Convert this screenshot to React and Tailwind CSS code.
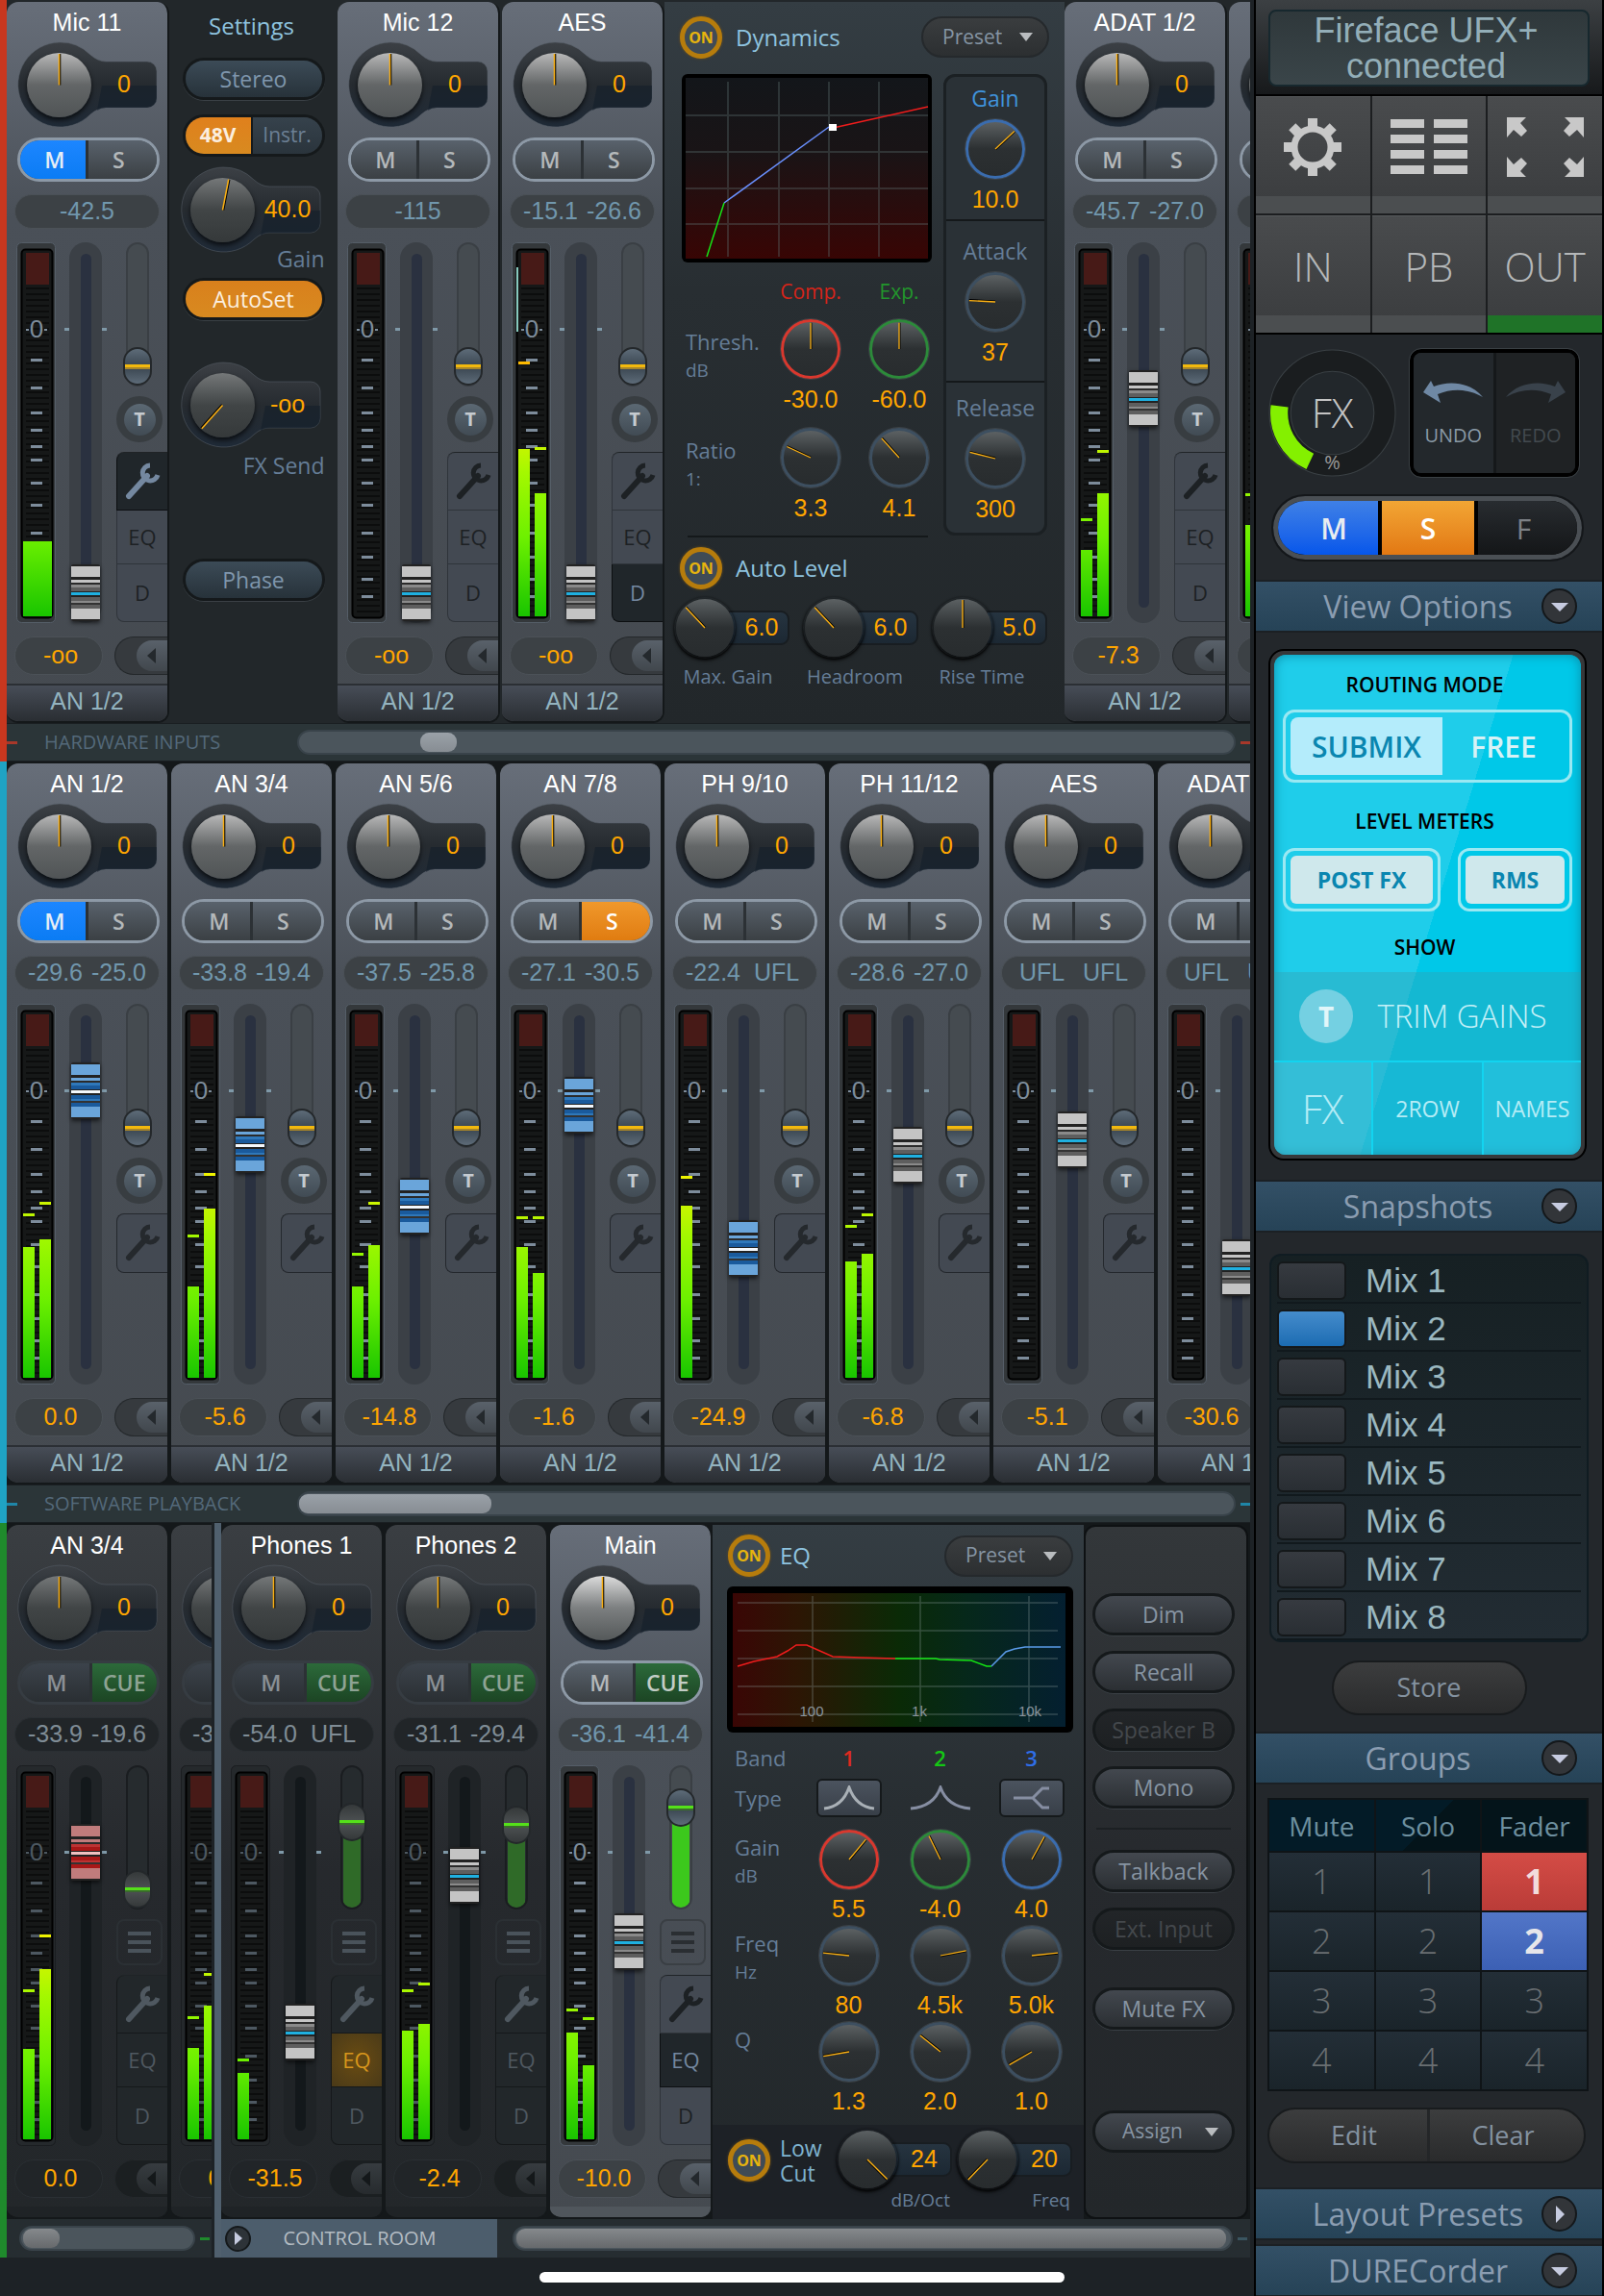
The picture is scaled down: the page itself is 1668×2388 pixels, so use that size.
import clsx from "clsx";

const hardwareInputs = {
  mic11: { name: "Mic 11", mute: true, levels: ["-42.5"], fader: 617, gain: "-oo", out: "AN 1/2", meter: { mono: true, l: 564 }, open: "tool" },
  mic12: { name: "Mic 12", levels: ["-115"], fader: 617, gain: "-oo", out: "AN 1/2", meter: {} },
  aes: { name: "AES", levels: ["-15.1", "-26.6"], fader: 617, gain: "-oo", out: "AN 1/2", meter: { l: 468, r: 514, pl: 378, pr: 467, reduction: true }, open: "D" },
  adat: { name: "ADAT 1/2", levels: ["-45.7", "-27.0"], fader: 415, gain: "-7.3", out: "AN 1/2", meter: { l: 573, r: 514, pl: 541, pr: 470 } },
  adat2: { name: "", levels: ["", ""], fader: 617, gain: "", out: "", meter: { l: 547, r: 547, pl: 515, pr: 515 } },
};

const playback = [
  { name: "AN 1/2", mute: true, levels: ["-29.6", "-25.0"], fader: 343, cap: "blue", gain: "0.0", meter: { l: 506, r: 498, pl: 472, pr: 460 } },
  { name: "AN 3/4", levels: ["-33.8", "-19.4"], fader: 399, cap: "blue", gain: "-5.6", meter: { l: 547, r: 466, pl: 494, pr: 430 } },
  { name: "AN 5/6", levels: ["-37.5", "-25.8"], fader: 463, cap: "blue", gain: "-14.8", meter: { l: 547, r: 504, pl: 513, pr: 460 } },
  { name: "AN 7/8", solo: true, levels: ["-27.1", "-30.5"], fader: 358, cap: "blue", gain: "-1.6", meter: { l: 506, r: 533, pl: 475, pr: 475 } },
  { name: "PH 9/10", levels: ["-22.4", "UFL"], fader: 507, cap: "blue", gain: "-24.9", meter: { l: 463, pl: 433 } },
  { name: "PH 11/12", levels: ["-28.6", "-27.0"], fader: 410, gain: "-6.8", meter: { l: 521, r: 513, pl: 484, pr: 472 } },
  { name: "AES", levels: ["UFL", "UFL"], fader: 394, gain: "-5.1", meter: {} },
  { name: "ADAT 1/2", levels: ["UFL", "UFL"], fader: 527, gain: "-30.6", meter: {} },
];

const outputs = {
  an34: { name: "AN 3/4", levels: ["-33.9", "-19.6"], fader: 343, cap: "red", gain: "0.0", trim: 0, meter: { l: 548, r: 465, pl: 487, pr: 430 } },
  an56: { name: "", levels: ["-33.9", ""], fader: 343, gain: "0.0", trim: 0, meter: { l: 547, r: 503, pl: 515, pr: 470 } },
  phones1: { name: "Phones 1", levels: ["-54.0", "UFL"], fader: 530, gain: "-31.5", trim: 70, meter: { l: 573, pl: 559 }, eqOn: true },
  phones2: { name: "Phones 2", levels: ["-31.1", "-29.4"], fader: 367, gain: "-2.4", trim: 67, meter: { l: 529, r: 522, pl: 487, pr: 480 } },
  main: { name: "Main", levels: ["-36.1", "-41.4"], fader: 436, gain: "-10.0", trim: 85, meter: { l: 531, r: 565, pl: 507, pr: 516 }, open: "EQ" },
};

const METER_TICKS = [375, 404, 430, 448, 465, 479, 503, 526, 555, 580, 603, 621];

const CAPS = {
  grey: "[--hi:#c4c4c4] [--mid:#8a8a8a] [--low:#5e5e5e] [--mark:#1fb0e0]",
  blue: "[--hi:#6aa5da] [--mid:#2f78ba] [--low:#1a5a9c] [--mark:#f4f8fc]",
  red: "[--hi:#c07c7c] [--mid:#bc3434] [--low:#a81818] [--mark:#f0c0c0]",
};

function Defs() {
  return (
    <svg width="0" height="0" className="absolute" aria-hidden="true">
      <defs>
        <linearGradient id="level" gradientUnits="userSpaceOnUse" x1="0" x2="0" y1="370" y2="643">
          <stop offset="0" stopColor="#ffb000" />
          <stop offset="0.2" stopColor="#f6f200" />
          <stop offset="0.45" stopColor="#a4f800" />
          <stop offset="0.7" stopColor="#6cf000" />
          <stop offset="1" stopColor="#18c400" />
        </linearGradient>
        <linearGradient id="socket" x1="0" x2="0" y1="0" y2="1">
          <stop offset="0" stopColor="#3c4045" />
          <stop offset="0.5" stopColor="#262b30" />
          <stop offset="1" stopColor="#1f2a37" />
        </linearGradient>
      </defs>
    </svg>
  );
}

function Dial({ label, angle = 0, size = "lg", tone = "dim", ring }) {
  const sizes = { lg: "size-[67px]", md: "size-[60px]", sm: "size-[62px]" };
  const tones = {
    light: "from-[#dcdcdc] via-[#7c7f80] to-[#55595a]",
    mid: "from-[#b9b9b9] via-[#636667] to-[#505456]",
    dim: "from-[#757879] via-[#414546] to-[#35393a]",
    dark: "from-[#5c6163] via-[#2c3032] to-[#282c2e]",
  };
  const rings = {
    red: "border-[#d9382e]",
    green: "border-[#2c8a3a]",
    blue: "border-[#3a6cae]",
    slate: "border-[#3d4f60]",
  };
  return (
    <div
      className={clsx(
        "relative shrink-0 rounded-full bg-linear-to-b",
        sizes[size],
        tones[tone],
        ring ? ["border-[3px] outline-1 outline-[#4a4f53]/60", rings[ring]] : "shadow-[0_3px_5px_rgba(0,0,0,0.7)]"
      )}
    >
      <svg viewBox="0 0 66 66" className="block size-full" aria-hidden="true">
        <g transform={`rotate(${angle} 33 33)`}>
          <line x1="34" y1="1" x2="34" y2="33" stroke="#000" strokeWidth="1.5" />
          <line x1="33" y1="1" x2="33" y2="33" stroke="#fbb013" strokeWidth="1.5" />
        </g>
      </svg>
      <input type="range" aria-label={label} min="-140" max="140" defaultValue={angle} className="absolute inset-0 size-full cursor-pointer opacity-0" />
    </div>
  );
}

function SocketKnob({ label, angle, tone, value }) {
  return (
    <div className="relative flex h-[90px] w-[148px] items-center">
      <svg viewBox="0 0 148 90" className="absolute inset-0" aria-hidden="true">
        <path
          d="M45 1A44 44 0 0 1 77 14Q85 21 93 21H136a10 10 0 0 1 10 10V59a10 10 0 0 1-10 10H93Q85 69 77 76A44 44 0 1 1 45 1Z"
          fill="url(#socket)"
          stroke="#5a626b"
          strokeOpacity="0.5"
        />
        <path d="M89 46h57v13a10 10 0 0 1-10 10H93q-5 0-9 3z" fill="#0f1c28" fillOpacity="0.5" />
      </svg>
      <div className="relative ml-[11px] flex items-center">
        <Dial label={label} angle={angle} tone={tone} />
        <output className="w-[68px] text-center text-[25px] text-[#ffa500]">{value}</output>
      </div>
    </div>
  );
}

function MiniKnob({ label, angle, value }) {
  return (
    <div className="flex items-center">
      <div className="relative z-10 rounded-full p-[2px] shadow-[0_1px_3px_#000]">
        <Dial label={label} angle={angle} size="md" tone="dark" />
      </div>
      <output className="-ml-[8px] flex h-[36px] w-[64px] items-center justify-center rounded-r-[9px] border-2 border-[#181d21] bg-linear-to-b from-[#263440] to-[#1c2833] pl-[6px] text-[25px] text-[#ffa500]">
        {value}
      </output>
    </div>
  );
}

function Meter({ mono, l, r, pl, pr, reduction, dark }) {
  const tick = dark ? "#4d5861" : "#7d8c9b";
  const leftWidth = mono ? 30 : 12;
  return (
    <svg viewBox="17 253 41 396" className="h-[396px] w-[41px] shrink-0" aria-hidden="true">
      <rect x="17.5" y="253.5" width="40" height="395" rx="5" fill={dark ? "#25292c" : "#34383b"} stroke={dark ? "#1a1d20" : "#555e68"} />
      <rect x="22.5" y="260.5" width="32" height="383" rx="4" fill="#161818" stroke="#000" strokeWidth="2" />
      <rect x="27" y="264" width="24" height="33" fill="#471a17" />
      {Array.from({ length: 57 }, (_, i) => (
        <rect key={i} x="27" y={300 + i * 6} width="24" height="2" fill="#0c0d0d" />
      ))}
      <text x="38" y="352" textAnchor="middle" fontSize="26" fill={tick} fontFamily="Liberation Sans, sans-serif">0</text>
      <path d="M27 344h3M46 344h3" stroke={tick} strokeWidth="2" />
      {METER_TICKS.map((y) => (
        <rect key={y} x="32" y={y - 1} width="12" height="3" fill={tick} />
      ))}
      {l && <rect x="24" y={l} width={leftWidth} height={642 - l} fill="url(#level)" />}
      {r && <rect x="41" y={r} width="12" height={642 - r} fill="url(#level)" />}
      {pl && <rect x="24" y={pl - 1} width="12" height="3" fill="url(#level)" />}
      {pr && <rect x="41" y={pr - 1} width="12" height="3" fill="url(#level)" />}
      {reduction && <rect x="22" y="279" width="2" height="67" fill="#86c9bd" />}
    </svg>
  );
}

function Fader({ name, center, cap = "grey", dark }) {
  return (
    <div className="relative flex h-[396px] w-[44px] shrink-0 justify-center">
      <div className={clsx("flex h-full w-[34px] justify-center rounded-full pt-3 pb-4", dark ? "bg-[#1f2326]" : "bg-[#3b4046]")}>
        <div className={clsx("w-[11px] rounded-full", dark ? "bg-[#13181b]" : "bg-[#2a3140]")} />
      </div>
      <div className="absolute inset-x-0 top-[89px] flex justify-between">
        <span className="h-[3px] w-[5px] bg-[#7f99a8]" />
        <span className="h-[3px] w-[5px] bg-[#7f99a8]" />
      </div>
      <input
        type="range"
        aria-label={`${name || "Channel"} fader`}
        min="0"
        max="335"
        defaultValue={617 - center}
        className={clsx(
          "absolute top-0 left-[7px] h-[394px] w-[30px] appearance-none bg-transparent [direction:rtl] [writing-mode:vertical-lr]",
          "[&::-webkit-slider-thumb]:h-[59px] [&::-webkit-slider-thumb]:w-[30px] [&::-webkit-slider-thumb]:appearance-none [&::-webkit-slider-thumb]:rounded-[2px]",
          "[&::-webkit-slider-thumb]:shadow-[0_2px_4px_rgba(0,0,0,0.6)]",
          "[&::-webkit-slider-thumb]:bg-[linear-gradient(#222_0_2px,var(--hi)_2px_13px,#222_13px_16px,var(--hi)_16px_19px,#2a2a2a_19px_21px,var(--mid)_21px_24px,var(--low)_24px_28px,#222_28px_29px,var(--mark)_29px_32px,#222_32px_34px,var(--low)_34px_38px,var(--mid)_38px_40px,#333_40px_42px,var(--low)_42px_46px,var(--hi)_46px_57px,#222_57px_59px)]",
          CAPS[cap]
        )}
      />
    </div>
  );
}

function TrimSlider({ name, value = 0, cue, dark }) {
  return (
    <div className="relative ml-[10px] h-[150px] w-[24px] shrink-0">
      <div
        className={clsx(
          "flex size-full flex-col justify-end overflow-hidden rounded-full border-2",
          dark ? "border-[#1a1d20] bg-[#262b2e]" : "border-[#3a3f44] bg-[#454b50]"
        )}
      >
        {cue && value > 0 && (
          <div className={clsx("mx-auto w-[18px]", dark ? "bg-[#2f6a28]" : "bg-[#3cc81c]")} style={{ height: value + 20 }} />
        )}
      </div>
      <input
        type="range"
        aria-label={`${name || "Channel"} trim`}
        min="0"
        max="110"
        defaultValue={value}
        className={clsx(
          "absolute -top-px -left-[3px] h-[150px] w-[30px] appearance-none bg-transparent [direction:rtl] [writing-mode:vertical-lr]",
          "[&::-webkit-slider-thumb]:h-[40px] [&::-webkit-slider-thumb]:w-[30px] [&::-webkit-slider-thumb]:appearance-none [&::-webkit-slider-thumb]:rounded-full",
          "[&::-webkit-slider-thumb]:border-2 [&::-webkit-slider-thumb]:border-[#24282b]",
          "[&::-webkit-slider-thumb]:bg-[linear-gradient(var(--a),var(--b)_16px,var(--c)_16px_19px,var(--d)_19px_21px,var(--b)_21px,var(--a))]",
          dark ? "[--a:#35393a] [--b:#4a4e50]" : "[--a:#5d6b78] [--b:#3e4a55]",
          cue ? "[--c:#55e01a] [--d:#3a6b2c]" : "[--c:#f2b90e] [--d:#a8862a]"
        )}
      />
    </div>
  );
}

function Wrench() {
  return (
    <svg viewBox="0 0 38 40" className="h-[40px] w-[38px]" fill="none" stroke="currentColor" aria-hidden="true">
      <path d="M5 35 24 14" strokeWidth="6" strokeLinecap="round" />
      <path d="M27 3A8 8 0 1 0 35 13" strokeWidth="5" />
    </svg>
  );
}

function SideTabs({ open, eqOn, dark }) {
  const base = "flex w-full items-center justify-center border-l border-b";
  const idle = dark
    ? "border-[#15181a] bg-[#22272a] text-[#4f5860]"
    : "border-[#2f343a] bg-[#434952] text-[#1d2124]";
  const active = "border-[#0c0f11] bg-[#20262a] text-[#7488a0]";
  return (
    <div className="mt-[10px] flex h-[177px] flex-col rounded-l-lg border-t border-[#202427] font-['Open_Sans',sans-serif] text-[22px] font-medium">
      <button aria-label="Settings" className={clsx(base, "h-[60px] rounded-tl-lg", open === "tool" ? active : idle)}>
        <Wrench />
      </button>
      <button
        className={clsx(
          base,
          "h-[56px]",
          eqOn ? "border-[#15181a] bg-radial from-[#6a4c10] to-[#4a3a18] text-[#d8961c]" : open === "EQ" ? active : idle
        )}
      >
        EQ
      </button>
      <button className={clsx(base, "grow rounded-bl-lg", open === "D" ? active : idle)}>D</button>
    </div>
  );
}

function MuteSolo({ mute, solo, cue, dark }) {
  return (
    <div
      className={clsx(
        "ml-[11px] mt-[10px] flex h-[46px] w-[148px] overflow-hidden rounded-full border-[3px] font-['Open_Sans',sans-serif] text-[23px] font-semibold text-[#b4b8ba]",
        dark ? "border-[#363c42]" : "border-[#8d99a6]"
      )}
    >
      <button
        className={clsx(
          "flex-1 border-r-[3px] border-[#2c3135] bg-linear-to-b pl-1",
          mute ? "from-[#1c86ff] to-[#0a7cf4] text-[#e6eef5]" : dark ? "from-[#3c434b] to-[#2a2f33] text-[#8a9095]" : "from-[#59626c] to-[#3b4044]"
        )}
      >
        M
      </button>
      <button
        className={clsx(
          "flex-1 bg-linear-to-b",
          cue && "from-[#2c6a3a] to-[#1c4524]",
          cue && (dark ? "text-[#8ea394]" : "text-[#c3cdc6]"),
          !cue && (solo ? "from-[#f0982a] to-[#e07c10] pr-2 text-white" : "from-[#59626c] to-[#3b4044] pr-2")
        )}
      >
        {cue ? "CUE" : "S"}
      </button>
    </div>
  );
}

function Channel({ ch, tone = "light", cue, open }) {
  const dark = tone === "dark";
  const well = dark ? "bg-[#212528] border-[#2a2f33]" : "bg-[#3c4145] border-[#4b5157]";
  return (
    <section
      className={clsx(
        "flex w-[169px] shrink-0 flex-col overflow-hidden rounded-xl border-r-2 border-b-2 border-[#14181a]",
        dark ? "bg-linear-to-b from-[#3a3e42] via-[#26292d] to-[#23272a]" : "bg-linear-to-b from-[#676e79] via-[#4a5058] via-30% to-[#454a50]"
      )}
    >
      <h2 className="h-[41px] text-center text-[25px] leading-[42px] text-white">{ch.name}</h2>
      <div className="ml-[10px]">
        <SocketKnob label={`${ch.name || "Channel"} pan`} tone={dark ? "dim" : open ? "light" : "mid"} value="0" />
      </div>
      <MuteSolo mute={ch.mute} solo={ch.solo} cue={cue} dark={dark} />
      <div
        className={clsx(
          "ml-[8px] mt-[13px] flex h-[36px] w-[151px] items-center justify-center rounded-full border text-[25px]",
          well,
          dark ? "text-[#7f8c95]" : "text-[#7197ad]"
        )}
      >
        {ch.levels.map((level, i) => (
          <span key={i} className="w-[66px] text-center whitespace-nowrap">{level}</span>
        ))}
      </div>
      <div className="mt-[14px] flex h-[398px] pl-[10px]">
        <Meter {...ch.meter} dark={dark} />
        <div className="ml-[9px]">
          <Fader name={ch.name} center={ch.fader} cap={ch.cap} dark={dark} />
        </div>
        <div className="ml-[10px] flex w-[55px] flex-col">
          <TrimSlider name={ch.name} value={ch.trim} cue={cue} dark={dark} />
          {cue ? (
            <button
              aria-label="Channel menu"
              className={clsx(
                "mt-[10px] flex h-[48px] w-[48px] flex-col items-center justify-center gap-[5px] rounded-lg border-2",
                dark ? "border-[#2b3034] text-[#4a535b]" : "border-[#3a3f44] text-[#2a2e32]"
              )}
            >
              <i className="h-[4px] w-[24px] bg-current" />
              <i className="h-[4px] w-[24px] bg-current" />
              <i className="h-[4px] w-[24px] bg-current" />
            </button>
          ) : (
            <button className="mt-[10px] flex size-[48px] items-center justify-center rounded-full bg-[#383d41]">
              <span className="flex size-[33px] items-center justify-center rounded-full bg-linear-to-b from-[#5b6873] to-[#414b54] font-['Open_Sans',sans-serif] text-[20px] font-bold text-[#c5cbd0]">
                T
              </span>
            </button>
          )}
          {ch.tabs !== "tool" && <SideTabs open={ch.open} eqOn={ch.eqOn} dark={dark} />}
          {ch.tabs === "tool" && (
            <button
              aria-label="Settings"
              className="mt-[10px] flex h-[62px] w-full items-center justify-center rounded-l-lg border border-r-0 border-[#24282d] bg-[#434952] text-[#25292d]"
            >
              <Wrench />
            </button>
          )}
        </div>
      </div>
      <div className="mt-[12px] flex h-[40px] justify-between pl-[8px]">
        <output className={clsx("flex w-[92px] items-center justify-center rounded-full border pl-[4px] text-[25px] text-[#ffa500]", well)}>{ch.gain}</output>
        <button
          aria-label="Collapse channel"
          className={clsx("flex w-[55px] justify-end rounded-l-full border border-r-0 border-[#24282b] p-[3px] pr-0", dark ? "bg-[#1b1f21]" : "bg-[#363a3e]")}
        >
          <span className={clsx("flex h-full w-[32px] items-center justify-center rounded-l-full bg-linear-to-b", dark ? "from-[#373c40] to-[#272b2e]" : "from-[#59616a] to-[#41474d]")}>
            <svg viewBox="0 0 10 16" className="h-[16px] w-[10px]" aria-hidden="true">
              <path d="M9 0v16L0 8z" fill={dark ? "#14181a" : "#24292d"} />
            </svg>
          </span>
        </button>
      </div>
      {cue ? (
        <div className={clsx("mt-[9px] h-[11px]", dark ? "bg-[#1f2326]" : "bg-[#50565c]")} />
      ) : (
        <div className="mt-[9px] h-[39px] border-t-2 border-[#2b2f34] bg-linear-to-b from-[#474d57] to-[#2a2e33] text-center text-[25px] leading-[32px] text-[#93b3bf]">
          {ch.out ?? "AN 1/2"}
        </div>
      )}
    </section>
  );
}

function PillButton({ children, variant = "blue", className }) {
  const variants = {
    blue: "from-[#3c4b57] to-[#27323a] text-[#7f96ac]",
    orange: "from-[#d9801c] to-[#d88a20] text-[#fbeede]",
    grey: "from-[#43484f] to-[#2b2f33] text-[#8794a2]",
    off: "from-[#222528] to-[#1d2022] text-[#44484c]",
  };
  return (
    <button
      className={clsx(
        "h-[44px] w-[148px] rounded-full border-[3px] border-[#15191b] bg-linear-to-b font-['Open_Sans',sans-serif] text-[23px] shadow-[0_1px_0_#3a4045]",
        variants[variant],
        className
      )}
    >
      {children}
    </button>
  );
}

function OnButton({ label }) {
  return (
    <button
      aria-label={label}
      className="flex size-[44px] shrink-0 items-center justify-center rounded-full border-[5px] border-[#b67c0c] bg-[#3f4b55] font-['Open_Sans',sans-serif] text-[16px] font-bold text-[#e6b40e] shadow-[0_0_3px_#6a5020]"
    >
      ON
    </button>
  );
}

function DropDown({ label, className, selectClass }) {
  return (
    <label className={clsx("relative flex items-center font-['Open_Sans',sans-serif] text-[21px]", className)}>
      <select aria-label={label} className={clsx("size-full cursor-pointer appearance-none rounded-full bg-linear-to-b", selectClass)}>
        <option>{label}</option>
      </select>
      <svg viewBox="0 0 14 9" className="pointer-events-none absolute right-[17px] h-[9px] w-[14px]" aria-hidden="true">
        <path d="M0 0h14L7 9z" fill="#b9bcbf" />
      </svg>
    </label>
  );
}

function SettingsPanel() {
  return (
    <aside className="flex w-[175px] shrink-0 flex-col items-center font-['Open_Sans',sans-serif]">
      <h3 className="mt-[5px] pr-[4px] text-[24px] leading-[40px] text-[#8ec3df]">Settings</h3>
      <PillButton className="mt-[13px]">Stereo</PillButton>
      <div className="mt-[15px] flex h-[44px] w-[148px] overflow-hidden rounded-full border-[3px] border-[#15191b] text-[21px]">
        <button className="w-[70px] border-r-2 border-[#15191b] bg-linear-to-b from-[#e0801c] to-[#d88a20] font-bold text-[#fbeede]">48V</button>
        <button className="flex-1 bg-linear-to-b from-[#36424c] to-[#2a343c] text-[#6b7f94]">Instr.</button>
      </div>
      <div className="mt-[10px] ml-[11px] self-start font-['Liberation_Sans',Arial,sans-serif]">
        <SocketKnob label="Gain" angle={11} value="40.0" />
      </div>
      <p className="-mt-[6px] w-[148px] text-right text-[23px] leading-[24px] text-[#657d97]">Gain</p>
      <PillButton variant="orange" className="mt-[8px]">AutoSet</PillButton>
      <div className="mt-[43px] ml-[11px] self-start font-['Liberation_Sans',Arial,sans-serif]">
        <SocketKnob label="FX Send" angle={-138} value="-oo" />
      </div>
      <p className="mt-[4px] w-[148px] text-right text-[23px] leading-[28px] text-[#657d97]">FX Send</p>
      <PillButton className="mt-[83px]">Phase</PillButton>
    </aside>
  );
}

function ParamKnob({ label, angle, ring = "slate", value }) {
  return (
    <div className="flex w-[92px] shrink-0 flex-col items-center">
      <Dial label={label} angle={angle} ring={ring} size="sm" tone="dark" />
      <output className="text-[25px] leading-[42px] text-[#ffa500]">{value}</output>
    </div>
  );
}

function ParamLabel({ children, unit }) {
  return (
    <div className="w-[84px] shrink-0 pt-[8px] font-['Open_Sans',sans-serif] text-[#657d97]">
      <p className="text-[22px] leading-[30px]">{children}</p>
      {unit && <p className="text-[19px] leading-[30px]">{unit}</p>}
    </div>
  );
}

function DynamicsPanel() {
  const side = [
    { name: "Gain", angle: 47, value: "10.0", ring: "blue", color: "text-[#4093dc]", box: "h-[150px]" },
    { name: "Attack", angle: -87, value: "37", color: "text-[#657d97]", box: "h-[168px]" },
    { name: "Release", angle: -76, value: "300", color: "text-[#657d97]", box: "h-[156px]" },
  ];
  return (
    <section className="flex w-[416px] shrink-0 flex-col bg-linear-to-b from-[#343d43] via-[#282e32] via-40% to-[#22272a]">
      <header className="flex h-[75px] items-center pl-[16px] pr-[16px] pb-[2px] font-['Open_Sans',sans-serif]">
        <OnButton label="Dynamics on" />
        <h3 className="ml-[14px] text-[24px] text-[#8ec3df]">Dynamics</h3>
        <DropDown label="Preset" className="ml-auto h-[43px] w-[133px]" selectClass="border-2 border-[#25292c] from-[#3a3d3f] to-[#2c2f31] pl-[20px] text-[#8594a3]" />
      </header>
      <div className="flex h-[480px]">
        <div className="ml-[18px] w-[272px] shrink-0">
          <svg viewBox="709 78 260 196" className="block h-[196px] w-[260px]" aria-label="Dynamics curve">
            <defs>
              <linearGradient id="dyn" x1="0" x2="0" y1="0" y2="1">
                <stop offset="0" stopColor="#13161a" />
                <stop offset="0.4" stopColor="#191416" />
                <stop offset="1" stopColor="#380504" />
              </linearGradient>
            </defs>
            <rect x="709" y="78" width="260" height="196" rx="6" fill="#000" />
            <rect x="713" y="82" width="252" height="188" fill="url(#dyn)" />
            <path d="M757 86V268M810 86V268M862 86V268M914 86V268M713 121H965M713 159H965M713 197H965M713 234H965" stroke="#5c7070" strokeOpacity="0.35" strokeWidth="2" />
            <path d="M735 268 753 212" stroke="#14e614" strokeWidth="1.5" />
            <path d="M753 212 862 133" stroke="#6a90ff" strokeWidth="1.5" />
            <path d="M862 135 965 112" stroke="#ee1c1c" strokeWidth="1.5" />
            <rect x="862" y="130" width="8" height="7" fill="#fff" />
          </svg>
          <div className="ml-[88px] mt-[11px] flex font-['Open_Sans',sans-serif] text-[21px] leading-[38px]">
            <span className="w-[92px] text-center text-[#d62419]">Comp.</span>
            <span className="w-[92px] text-center text-[#22962c]">Exp.</span>
          </div>
          <div className="mt-[10px] flex pl-[4px]">
            <ParamLabel unit="dB">Thresh.</ParamLabel>
            <ParamKnob label="Compressor threshold" ring="red" value="-30.0" />
            <ParamKnob label="Expander threshold" ring="green" value="-60.0" />
          </div>
          <div className="mt-[9px] flex pl-[4px]">
            <ParamLabel unit="1:">Ratio</ParamLabel>
            <ParamKnob label="Compressor ratio" angle={-65} value="3.3" />
            <ParamKnob label="Expander ratio" angle={-42} value="4.1" />
          </div>
        </div>
        <div className="h-[480px] w-[108px] rounded-xl border-[3px] border-[#1b2023] bg-[#2a3136]">
          {side.map((s) => (
            <div key={s.name} className={clsx("flex flex-col items-center justify-center border-b-2 border-[#14181a] last:border-b-0", s.box)}>
              <span className={clsx("font-['Open_Sans',sans-serif] text-[23px] leading-[44px]", s.color)}>{s.name}</span>
              <Dial label={s.name} angle={s.angle} ring={s.ring ?? "slate"} size="sm" tone="dark" />
              <output className="text-[25px] leading-[42px] text-[#ffa500]">{s.value}</output>
            </div>
          ))}
        </div>
      </div>
      <hr className="ml-[24px] w-[250px] border-t-2 border-[#14181a]" />
      <div className="mt-[10px] flex items-center pl-[16px]">
        <OnButton label="Auto Level on" />
        <h3 className="ml-[14px] font-['Open_Sans',sans-serif] text-[24px] leading-[44px] text-[#8ec3df]">Auto Level</h3>
      </div>
      <div className="mt-[8px] flex gap-[14px] pl-[10px]">
        <MiniKnob label="Max. Gain" angle={-43} value="6.0" />
        <MiniKnob label="Headroom" angle={-43} value="6.0" />
        <MiniKnob label="Rise Time" angle={0} value="5.0" />
      </div>
      <div className="grid w-[402px] grid-cols-3 pr-[6px] text-center font-['Open_Sans',sans-serif] text-[20px] leading-[38px] text-[#657d97]">
        <span>Max. Gain</span>
        <span>Headroom</span>
        <span>Rise Time</span>
      </div>
    </section>
  );
}

function EqPanel() {
  const knobs = [
    { name: "Gain", unit: "dB", bands: [["5.5", 40, "red"], ["-4.0", -26, "green"], ["4.0", 29, "blue"]] },
    { name: "Freq", unit: "Hz", bands: [["80", -84], ["4.5k", 79], ["5.0k", 84]] },
    { name: "Q", bands: [["1.3", -100], ["2.0", -51], ["1.0", -120]] },
  ];
  return (
    <section className="flex w-[386px] shrink-0 flex-col bg-linear-to-b from-[#343d43] via-[#282e32] via-40% to-[#22272a]">
      <header className="flex h-[64px] items-center pl-[16px] pr-[11px] font-['Open_Sans',sans-serif]">
        <OnButton label="EQ on" />
        <h3 className="ml-[10px] text-[24px] text-[#8ec3df]">EQ</h3>
        <DropDown label="Preset" className="ml-auto h-[43px] w-[134px]" selectClass="border-2 border-[#25292c] from-[#3a3d3f] to-[#2c2f31] pl-[20px] text-[#8594a3]" />
      </header>
      <svg viewBox="757 1649 360 152" className="ml-[15px] block h-[152px] w-[360px]" aria-label="EQ curve">
        <defs>
          <linearGradient id="eq">
            <stop offset="0" stopColor="#3a0605" />
            <stop offset="0.2" stopColor="#2c1604" />
            <stop offset="0.5" stopColor="#0a2a06" />
            <stop offset="0.7" stopColor="#06281a" />
            <stop offset="1" stopColor="#041f30" />
          </linearGradient>
        </defs>
        <rect x="757" y="1649" width="360" height="152" rx="6" fill="#000" />
        <rect x="763" y="1656" width="346" height="139" fill="url(#eq)" />
        <path d="M768 1666H1101M768 1695H1101M768 1724H1101M768 1753H1101M768 1782H1101M846 1659V1790M958 1659V1790M1071 1659V1790" stroke="#8a9a9a" strokeOpacity="0.35" strokeWidth="1.5" />
        <g fill="none" strokeWidth="1.5">
          <path d="M768 1732 785 1727 809 1722 820 1716 829 1710H840L849 1714 867 1722 896 1723 932 1724" stroke="#ee1c1c" />
          <path d="M932 1724H974L978 1725 1011 1726 1027 1732H1032" stroke="#14e614" />
          <path d="M1032 1732 1047 1717 1056 1714 1067 1712H1104" stroke="#5a9ae8" />
        </g>
        <g fontFamily="Liberation Sans, sans-serif" fontSize="15" fill="#8a949c" textAnchor="middle">
          <text x="845" y="1784">100</text>
          <text x="957" y="1784">1k</text>
          <text x="1072" y="1784">10k</text>
        </g>
      </svg>
      <div className="flex pl-[23px] pt-[8px] font-['Open_Sans',sans-serif] text-[22px] leading-[36px]">
        <span className="w-[71px] text-[#657d97]">Band</span>
        <span className="w-[95px] text-center font-semibold text-[#e02a20]">1</span>
        <span className="w-[95px] text-center font-semibold text-[#14c814]">2</span>
        <span className="w-[95px] text-center font-semibold text-[#2f6ee8]">3</span>
      </div>
      <div className="flex h-[48px] items-center pl-[23px]">
        <span className="w-[71px] font-['Open_Sans',sans-serif] text-[22px] text-[#657d97]">Type</span>
        <div className="flex w-[95px] justify-center">
          <button aria-label="Band 1 bell" className="flex h-[40px] w-[68px] items-center justify-center rounded-md border-2 border-[#15191b] bg-linear-to-b from-[#4b535e] to-[#383f48]">
            <svg viewBox="0 0 54 26" className="w-[54px]" fill="none" stroke="#a9b0b6" strokeWidth="3" aria-hidden="true">
              <path d="M1 24Q20 22 27 2Q34 22 53 24" />
            </svg>
          </button>
        </div>
        <div className="flex w-[95px] justify-center">
          <svg viewBox="0 0 64 26" className="w-[64px]" fill="none" stroke="#868ea2" strokeWidth="3" aria-label="Band 2 bell">
            <path d="M1 24Q25 22 32 2Q39 22 63 24" />
          </svg>
        </div>
        <div className="flex w-[95px] justify-center">
          <button aria-label="Band 3 shelf" className="flex h-[40px] w-[68px] items-center justify-center rounded-md border-2 border-[#15191b] bg-linear-to-b from-[#4b535e] to-[#383f48]">
            <svg viewBox="0 0 38 24" className="w-[38px]" fill="none" stroke="#868ea2" strokeWidth="3" aria-hidden="true">
              <path d="M0 12H20M37 2H30L20 12L30 22H37" />
            </svg>
          </button>
        </div>
      </div>
      {knobs.map((row) => (
        <div key={row.name} className="flex h-[100px] pl-[23px] pt-[9px]">
          <div className="w-[71px] pt-[3px] font-['Open_Sans',sans-serif] text-[#657d97]">
            <p className="text-[22px] leading-[30px]">{row.name}</p>
            {row.unit && <p className="text-[19px] leading-[30px]">{row.unit}</p>}
          </div>
          {row.bands.map(([value, angle, ring], i) => (
            <div key={i} className="flex w-[95px] flex-col items-center">
              <Dial label={`${row.name} band ${i + 1}`} angle={angle} ring={ring ?? "slate"} size="sm" tone="dark" />
              <output className="text-[25px] leading-[40px] text-[#ffa500]">{value}</output>
            </div>
          ))}
        </div>
      ))}
      <div className="mt-auto flex h-[98px] bg-[#1d2126] pl-[16px] pt-[4px]">
        <div className="flex h-[66px] items-center self-start">
          <OnButton label="Low Cut on" />
          <p className="ml-[10px] w-[47px] font-['Open_Sans',sans-serif] text-[23px] leading-[26px] text-[#7fb3cf]">Low Cut</p>
        </div>
        <div className="ml-[12px]">
          <MiniKnob label="Low Cut slope" angle={135} value="24" />
          <p className="pr-[2px] text-right font-['Open_Sans',sans-serif] text-[19px] leading-[20px] text-[#657d97]">dB/Oct</p>
        </div>
        <div className="ml-[5px]">
          <MiniKnob label="Low Cut frequency" angle={-136} value="20" />
          <p className="pr-[2px] text-right font-['Open_Sans',sans-serif] text-[19px] leading-[20px] text-[#657d97]">Freq</p>
        </div>
      </div>
    </section>
  );
}

function ControlButtons() {
  return (
    <section className="flex w-[171px] shrink-0 flex-col items-center rounded-xl border-2 border-[#0e1113] bg-linear-to-b from-[#33373a] via-[#26292d] to-[#23272a] pt-[69px] pr-[5px]">
      <PillButton variant="grey">Dim</PillButton>
      <PillButton variant="grey" className="mt-[16px]">Recall</PillButton>
      <PillButton variant="off" className="mt-[16px]">Speaker B</PillButton>
      <PillButton variant="grey" className="mt-[16px]">Mono</PillButton>
      <hr className="mt-[20px] w-[140px] border-t-2 border-[#1c2023]" />
      <PillButton variant="grey" className="mt-[21px]">Talkback</PillButton>
      <PillButton variant="off" className="mt-[16px]">Ext. Input</PillButton>
      <PillButton variant="grey" className="mt-[39px]">Mute FX</PillButton>
      <DropDown label="Assign" className="mt-[84px] h-[44px] w-[148px]" selectClass="border-[3px] border-[#15191b] from-[#43484f] to-[#2b2f33] pl-[28px] text-[#8794a2]" />
    </section>
  );
}

function ScrollTrack({ className, thumb, thumbClass = "from-[#9aa1a8] to-[#878d93]" }) {
  return (
    <div className={clsx("flex h-[26px] items-center rounded-full border-2 border-[#39434a] bg-[#4b555c]", className)}>
      <div className={clsx("h-[20px] rounded-[9px] bg-linear-to-b", thumb, thumbClass)} />
    </div>
  );
}

function RowBar({ title, marker, thumb }) {
  return (
    <div className="flex h-[40px] items-center border-y border-[#1a1f22] bg-[#2b3538]">
      <span className={clsx("h-[3px] w-[11px]", marker)} />
      <h3 className="w-[291px] pl-[28px] font-['Open_Sans',sans-serif] text-[20px] font-medium whitespace-nowrap text-[#54697a]">{title}</h3>
      <ScrollTrack className="min-w-0 flex-1" thumb={thumb} />
      <span className={clsx("ml-[5px] h-[3px] w-[10px]", marker)} />
    </div>
  );
}

function SectionHeader({ title, closed }) {
  return (
    <button className="flex h-[55px] w-full shrink-0 items-center border-y-2 border-[#1b2024] bg-linear-to-b from-[#335066] to-[#264357] font-['Open_Sans',sans-serif] text-[32px] leading-[48px] text-[#8b9db1]">
      <span className="flex-1 pl-[40px] text-center">{title}</span>
      <span className="mr-[26px] flex size-[37px] items-center justify-center rounded-full border-2 border-[#14181b] bg-[#323539]">
        <svg viewBox="0 0 18 18" className="size-[18px]" aria-hidden="true">
          <path d={closed ? "M5 0v18l9-9z" : "M0 5h18l-9 9z"} fill="#c6cbe0" />
        </svg>
      </span>
    </button>
  );
}

function TopButtons() {
  const cell =
    "flex h-[122px] flex-col border-t border-[#56595b] bg-linear-to-b from-[#494b4d] to-[#3a3c3e] font-['Open_Sans',sans-serif] text-[42px] font-light text-[#b5b8b9]";
  const face = "flex flex-1 items-center justify-center";
  return (
    <nav className="grid grid-cols-3 gap-[2px] border-y-2 border-black bg-[#1c1e20]">
      <button aria-label="Setup" className={cell}>
        <span className={face}>
          <svg viewBox="-31 -31 62 62" className="size-[62px]" fill="#c8c8c8" aria-hidden="true">
            <circle r="19" fill="none" stroke="#c8c8c8" strokeWidth="7" />
            {[0, 45, 90, 135, 180, 225, 270, 315].map((a) => (
              <path key={a} d="M-5 -21V-30H5V-21Z" transform={`rotate(${a})`} />
            ))}
          </svg>
        </span>
        <span className="h-[18px] bg-[#4b4e50]" />
      </button>
      <button aria-label="Channel layout" className={cell}>
        <span className={face}>
          <svg viewBox="0 0 80 58" className="w-[80px]" fill="#c8c8c8" aria-hidden="true">
            <path d="M0 0h35v9H0zM0 16h35v9H0zM0 32h35v9H0zM0 48h35v9H0zM45 0h35v9H45zM45 16h35v9H45zM45 32h35v9H45zM45 48h35v9H45z" />
          </svg>
        </span>
        <span className="h-[18px] bg-[#4b4e50]" />
      </button>
      <button aria-label="Full screen" className={cell}>
        <span className={face}>
          <svg viewBox="0 0 80 62" className="w-[80px]" fill="#c8c8c8" aria-hidden="true">
            <path d="M0 0h20l-6 6 7 8-6 6-8-7-7 8zM80 0H60l6 6-7 8 6 6 8-7 7 8zM0 62h20l-6-6 7-8-6-6-8 7-7-8zM80 62H60l6-6-7-8 6-6 8 7 7-8z" />
          </svg>
        </span>
        <span className="h-[18px] bg-[#4b4e50]" />
      </button>
      {["IN", "PB", "OUT"].map((name) => (
        <button key={name} className={cell}>
          <span className={face}>{name}</span>
          <span className={clsx("h-[18px]", name === "OUT" ? "bg-[#1f7328]" : "bg-[#4b4e50]")} />
        </button>
      ))}
    </nav>
  );
}

function MasterControls() {
  return (
    <div className="px-[13px] pt-[15px] pb-[21px] font-['Open_Sans',sans-serif]">
      <div className="flex items-center gap-[14px]">
        <div className="relative size-[133px] shrink-0">
          <svg viewBox="0 0 132 132" className="size-full" aria-hidden="true">
            <circle cx="66" cy="66" r="65" fill="#1a1d1f" stroke="#3a4044" />
            <path d="M11.500 59A55 55 0 0 0 43 116" fill="none" stroke="#84f000" strokeWidth="18" />
            <circle cx="66" cy="66" r="43" fill="#22272b" stroke="#3a4044" />
          </svg>
          <div className="absolute inset-0 flex flex-col items-center pt-[37px] text-[#c4c4c4]">
            <span className="text-[42px] leading-[58px] font-light">FX</span>
            <span className="mt-[10px] text-[20px] leading-[26px] text-[#9a9a9a]">%</span>
          </div>
        </div>
        <div className="flex h-[133px] w-[176px] overflow-hidden rounded-xl border-4 border-black outline-1 outline-[#3a4044]">
          <button className="flex flex-1 flex-col items-center gap-[18px] border-r-[3px] border-[#15181a] bg-[#23282c] text-[20px] text-[#8a9aa6]">
            <svg viewBox="0 0 62 25" className="mt-[28px] w-[62px]" fill="#6f88a4" aria-hidden="true">
              <path d="M0 13 8 1l3 6C28 0 50 3 62 18 46 9 30 9 15 15l3 9z" />
            </svg>
            UNDO
          </button>
          <button className="flex flex-1 flex-col items-center gap-[18px] bg-[#1f2224] text-[20px] text-[#434a4f]">
            <svg viewBox="0 0 62 25" className="mt-[28px] w-[62px]" fill="#39424b" aria-hidden="true">
              <path d="M62 13 54 1l-3 6C34 0 12 3 0 18 16 9 32 9 47 15l-3 9z" />
            </svg>
            REDO
          </button>
        </div>
      </div>
      <div className="mt-[20px] ml-[5px] flex h-[66px] w-[321px] overflow-hidden rounded-full border-[5px] border-[#4a4f54] bg-black text-[30px] font-semibold outline-2 outline-[#14171a]">
        <button className="w-[104px] bg-linear-to-b from-[#3f80e6] to-[#0556ea] pl-[12px] text-[#e8ecf0]">M</button>
        <button className="mx-[4px] w-[96px] bg-linear-to-b from-[#f2a634] to-[#e27812] text-white">S</button>
        <button className="flex-1 bg-linear-to-b from-[#282c30] to-[#141618] pr-[8px] font-normal text-[#7d8186]">F</button>
      </div>
    </div>
  );
}

function ViewOptions() {
  const chip = "rounded-xl border-[3px] border-[#9ae8f2] p-[5px]";
  const heading = "pr-[6px] text-center text-[21px] leading-[40px] font-semibold text-black";
  return (
    <div className="px-[13px] pt-[17px] pb-[20px] font-['Open_Sans',sans-serif]">
      <div className="w-[331px] rounded-2xl border-2 border-black bg-[#36383a] p-[4px]">
        <div className="flex h-[520px] flex-col overflow-hidden rounded-xl bg-[linear-gradient(107deg,#1fcdea_0_52%,#00c8e8_52%)] shadow-[inset_0_0_12px_#0a8ca8]">
          <h3 className={clsx("mt-[11px]", heading)}>ROUTING MODE</h3>
          <div className={clsx(chip, "mx-[9px] mt-[6px] flex h-[76px] shrink-0 text-[30px] font-semibold")}>
            <button className="w-[158px] rounded-l-lg bg-[#b4ecfb] text-[#0a86b0]">SUBMIX</button>
            <button className="flex-1 text-[#d8f2f6]">FREE</button>
          </div>
          <h3 className={clsx("mt-[20px]", heading)}>LEVEL METERS</h3>
          <div className="mx-[9px] mt-[8px] flex h-[66px] shrink-0 gap-[18px] text-[23px] font-bold text-[#0a86b0]">
            <div className={clsx(chip, "w-[164px]")}>
              <button className="size-full rounded-md bg-[#cfe8ec]">POST FX</button>
            </div>
            <div className={clsx(chip, "flex-1")}>
              <button className="size-full rounded-md bg-[#cfe8ec]">RMS</button>
            </div>
          </div>
          <h3 className={clsx("mt-[17px]", heading)}>SHOW</h3>
          <button className="mt-[6px] flex h-[92px] w-full shrink-0 items-center bg-[#3a9aa8]/35 pl-[26px] text-[33px] font-light text-[#c4f0f8]">
            <span className="flex size-[56px] items-center justify-center rounded-full bg-[#74d0e2] text-[28px] font-bold text-[#e2f6fa]">T</span>
            <span className="flex-1 pr-[10px] text-center whitespace-nowrap">TRIM GAINS</span>
          </button>
          <div className="grid grow grid-cols-[103px_1fr_101px] border-t-2 border-[#12d4f0] text-[23px] text-[#b4ecf6]">
            <button className="border-r-2 border-[#12d4f0] bg-[#4ab0c4]/50 text-[42px] leading-[50px] font-light">FX</button>
            <button className="border-r-2 border-[#12d4f0] bg-[#3aa0b8]/40">2ROW</button>
            <button className="bg-[#4ab4cc]/45">NAMES</button>
          </div>
        </div>
      </div>
    </div>
  );
}

function Snapshots() {
  return (
    <div className="flex flex-col items-center px-[14px] pt-[22px] pb-[17px]">
      <ul className="w-full rounded-xl border-2 border-[#101c22] bg-linear-to-b from-[#162023] to-[#222c33] px-[6px]">
        {[1, 2, 3, 4, 5, 6, 7, 8].map((n) => (
          <li key={n}>
            <label className="flex h-[50px] items-center border-b-2 border-[#11191d] pt-[3px] text-[35px] leading-[44px] text-[#9bb8c0]">
              <input
                type="radio"
                name="snapshot"
                defaultChecked={n === 2}
                className="h-[40px] w-[72px] appearance-none rounded-md border-2 border-[#14181a] bg-linear-to-b from-[#363a40] to-[#292e33] checked:from-[#448ccc] checked:to-[#1b6cb2]"
              />
              <span className="ml-[20px]">Mix {n}</span>
            </label>
          </li>
        ))}
      </ul>
      <button className="mt-[19px] h-[57px] w-[203px] rounded-full border-2 border-[#181b1d] bg-linear-to-b from-[#3c3d3e] to-[#2a2b2c] font-['Open_Sans',sans-serif] text-[27px] text-[#8492a0]">
        Store
      </button>
    </div>
  );
}

function Groups() {
  const plain = "bg-linear-to-b from-[#232e37] to-[#1a242a] text-[#6a6f72]";
  return (
    <div className="px-[12px] pt-[14px] pb-[25px] font-['Open_Sans',sans-serif]">
      <table className="w-[334px] border-separate border-spacing-[2px] bg-[#0f1417] text-center">
        <thead>
          <tr className="h-[53px] bg-[linear-gradient(135deg,#031b27_0_50%,#04141a_50%)] text-[28px] text-[#6d8f9f]">
            {["Mute", "Solo", "Fader"].map((h) => (
              <th key={h} className="w-1/3 font-normal">{h}</th>
            ))}
          </tr>
        </thead>
        <tbody className="text-[36px] leading-[50px]">
          {[1, 2, 3, 4].map((n) => (
            <tr key={n}>
              <td><button className={clsx("block h-[60px] w-full font-light", plain)}>{n}</button></td>
              <td><button className={clsx("block h-[60px] w-full font-light", plain)}>{n}</button></td>
              <td>
                <button
                  className={clsx(
                    "block h-[60px] w-full",
                    n > 2 && [plain, "font-light"],
                    n === 1 && "bg-linear-to-b from-[#d44c46] to-[#ba3c38] font-bold text-[#f2dcdc]",
                    n === 2 && "bg-linear-to-b from-[#5276c8] to-[#3c60b4] font-bold text-[#e6e6ea]"
                  )}
                >
                  {n}
                </button>
              </td>
            </tr>
          ))}
        </tbody>
      </table>
      <div className="mt-[17px] flex h-[58px] w-[331px] overflow-hidden rounded-full border-2 border-[#181b1d] bg-linear-to-b from-[#3c3d3e] to-[#2a2b2c] text-[27px] text-[#8492a0]">
        <button className="flex-1 border-r-[3px] border-[#242628] pl-[12px]">Edit</button>
        <button className="flex-1 pr-[8px]">Clear</button>
      </div>
    </div>
  );
}

function Sidebar() {
  return (
    <aside className="flex w-[364px] shrink-0 flex-col border-x-2 border-black bg-[#23272b]">
      <div className="h-[98px] bg-linear-to-b from-[#3c4043] to-[#17191b] px-[13px] pt-[10px]">
        <p className="flex h-[80px] items-center justify-center rounded-lg border-2 border-[#17282e] bg-linear-to-b from-[#2f383b] to-[#3a4549] pr-[6px] text-center text-[36px] leading-[37px] text-[#93aeb8]">
          Fireface UFX+
          <br />
          connected
        </p>
      </div>
      <TopButtons />
      <MasterControls />
      <SectionHeader title="View Options" />
      <ViewOptions />
      <SectionHeader title="Snapshots" />
      <Snapshots />
      <SectionHeader title="Groups" />
      <Groups />
      <SectionHeader title="Layout Presets" closed />
      <div className="h-[4px]" />
      <SectionHeader title="DURECorder" />
    </aside>
  );
}

export default function App() {
  return (
    <div className="relative flex min-h-screen overflow-hidden bg-[#1d2226] font-['Liberation_Sans',Arial,sans-serif]">
      <Defs />
      <main className="flex min-w-0 flex-1 flex-col pr-[4px]">
        <div className="border-l-[7px] border-[#c8371f]">
          <div className="flex overflow-hidden bg-[#22272a] pt-[2px]">
            <Channel ch={hardwareInputs.mic11} />
            <SettingsPanel />
            <div className="flex shrink-0 gap-[2px]">
              <Channel ch={hardwareInputs.mic12} />
              <Channel ch={hardwareInputs.aes} />
            </div>
            <DynamicsPanel />
            <div className="flex shrink-0 gap-[2px]">
              <Channel ch={hardwareInputs.adat} />
              <Channel ch={hardwareInputs.adat2} />
            </div>
          </div>
          <RowBar title="HARDWARE INPUTS" marker="bg-[#a8382a]" thumb="ml-[126px] w-[38px]" />
        </div>

        <div className="border-l-[7px] border-[#1fa3c4]">
          <div className="flex gap-[2px] overflow-hidden bg-[#14181a] pt-[2px]">
            {playback.map((ch, i) => (
              <Channel key={i} ch={{ ...ch, tabs: "tool" }} />
            ))}
          </div>
          <RowBar title="SOFTWARE PLAYBACK" marker="bg-[#1f86a8]" thumb="w-[200px]" />
        </div>

        <div className="flex border-l-[7px] border-[#1f8a2c]">
          <div className="w-[213px] shrink-0 overflow-hidden bg-[#14181a]">
            <div className="flex gap-[2px] pt-[2px]">
              <Channel ch={outputs.an34} tone="dark" cue />
              <Channel ch={outputs.an56} tone="dark" cue />
            </div>
            <div className="flex h-[40px] items-center bg-[#262d31] pl-[13px]">
              <ScrollTrack className="w-[183px]" thumb="ml-[2px] w-[38px]" thumbClass="from-[#85898c] to-[#66696c]" />
              <span className="ml-[5px] h-[3px] w-[10px] bg-[#1f8a2c]" />
            </div>
          </div>
          <div className="ml-[3px] w-[7px] shrink-0 bg-[#50606e]" />
          <div className="min-w-0 flex-1 bg-[#14181a]">
            <div className="flex pt-[2px]">
              <div className="flex shrink-0 gap-[2px]">
                <Channel ch={outputs.phones1} tone="dark" cue />
                <Channel ch={outputs.phones2} tone="dark" cue />
                <Channel ch={outputs.main} cue open />
              </div>
              <EqPanel />
              <ControlButtons />
            </div>
            <div className="flex h-[40px] items-center bg-[#262d31] pr-[3px]">
              <button className="flex h-full w-[287px] items-center bg-[#4c5d6c] font-['Open_Sans',sans-serif] text-[20px] font-medium text-[#b4bcc3]">
                <span className="ml-[4px] flex size-[27px] items-center justify-center rounded-full border-2 border-[#15191b] bg-[#2d3338]">
                  <svg viewBox="0 0 8 14" className="h-[14px] w-[8px]" aria-hidden="true">
                    <path d="M0 0v14l8-7z" fill="#c6cbe0" />
                  </svg>
                </span>
                <span className="flex-1 pr-[46px] pl-[16px] text-center whitespace-nowrap">CONTROL ROOM</span>
              </button>
              <ScrollTrack className="ml-[16px] flex-1" thumb="ml-[2px] w-[738px]" thumbClass="from-[#85898c] to-[#66696c]" />
              <span className="ml-[5px] h-[3px] w-[10px] bg-[#3a5560]" />
            </div>
          </div>
        </div>
      </main>
      <Sidebar />
      <div className="absolute bottom-[15px] left-1/2 h-[11px] w-[546px] -translate-x-1/2 rounded-full bg-white" />
    </div>
  );
}
